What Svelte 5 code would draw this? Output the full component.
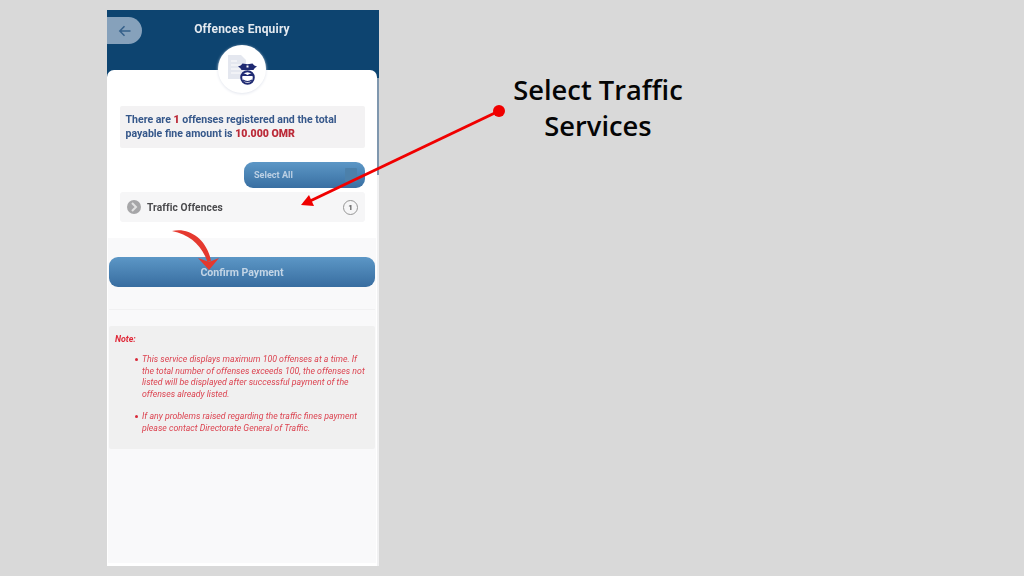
<script>
	const notes = [
		'This service displays maximum 100 offenses at a time. If the total number of offenses exceeds 100, the offenses not listed will be displayed after successful payment of the offenses already listed.',
		'If any problems raised regarding the traffic fines payment please contact Directorate General of Traffic.'
	]
</script>

<div class="slide">
	<div class="phone">
		<header class="top">
			<div class="back">
				<svg width="14" height="14" viewBox="0 0 14 14" fill="none" stroke="#35608a" stroke-width="1.5">
					<path d="M12.5 7H2M6.500 2.200 1.800 7l4.700 4.800" />
				</svg>
			</div>
			<h1>Offences Enquiry</h1>
		</header>

		<main class="card">
			<div class="badge">
				<svg width="36" height="36" viewBox="0 0 36 36">
					<path d="M4 4h13l5 5v19H4z" fill="#e4e7ef" />
					<path d="M7 10h6M7 14h12M7 18h9M7 22h9" stroke="#f5f6f9" stroke-width="1.500" />
					<path d="M14 15.500c2-.5 3.500-1.500 4.500-3l5 .8 5-.8c1 1.500 2.500 2.500 4.500 3-1.500 1-3 2-3.500 3.500h-12c-.5-1.500-2-2.500-3.500-3.500z" fill="#1f2a72" />
					<rect x="22.500" y="14.500" width="2" height="2" fill="#fff" />
					<circle cx="23.500" cy="26.500" r="6.300" fill="#fff" stroke="#1f2a72" stroke-width="2" />
					<path d="M17.500 25c1.500-3 3-2.500 6-1 3-1.500 4.500-2 6 1" fill="#1f2a72" />
					<path d="M19 29c2.500 2 6.500 2 9 0" stroke="#1f2a72" stroke-width="1.200" fill="none" />
				</svg>
			</div>

			<section class="intro">
				<p class="summary">
					There are <b>1</b> offenses registered and the total payable fine amount is <b>10.000 OMR</b>
				</p>
				<div class="actions">
					<button class="select-all"><span>Select All</span><i></i></button>
				</div>
				<div class="row">
					<span class="chevron">
						<svg width="8" height="10" viewBox="0 0 8 10" fill="none" stroke="#e2e2e2" stroke-width="2">
							<path d="M2 1l4 4-4 4" />
						</svg>
					</span>
					<span class="row-title">Traffic Offences</span>
					<span class="count">1</span>
				</div>
			</section>

			<section class="lower">
				<button class="confirm">Confirm Payment</button>
				<hr />
				<div class="note">
					<h2>Note:</h2>
					<ul>
						{#each notes as note}
							<li>{note}</li>
						{/each}
					</ul>
				</div>
			</section>
		</main>
	</div>

	<div class="callout">Select Traffic<br />Services</div>

	<svg class="overlay" width="1024" height="576" viewBox="0 0 1024 576">
		<circle cx="499" cy="111" r="6" fill="#f00000" />
		<path d="M499 111 308 202" stroke="#f00000" stroke-width="3" />
		<path d="M301 205 309 195 314 206z" fill="#f00000" />
		<path d="M172 231c17-4 35 8 39 30l-3.500 1c-6-17-17-27-35.500-31z" fill="#e5392f" />
		<path d="M198 258 209 262 219 258 209 270z" fill="#e5392f" />
	</svg>
</div>

<style>
	:global(body) {
		margin: 0;
		background: #d9d9d9;
	}

	.slide {
		position: relative;
		width: 1024px;
		height: 576px;
		overflow: hidden;
		padding: 10px 0 0 107px;
		box-sizing: border-box;
		background: #d9d9d9;
		font-family: Roboto, "Liberation Sans", sans-serif;
	}

	.phone {
		width: 272px;
		height: 556px;
		display: flex;
		flex-direction: column;
		background: linear-gradient(#0d4470 0, #0d4470 68px, #7f97ae 68px, #7f97ae 165px, #f1f1f2 165px);
		filter: blur(0.45px);
	}

	.top {
		height: 60px;
		flex: none;
		position: relative;
		box-sizing: border-box;
		padding-top: 11px;
		text-align: center;
	}

	.back {
		position: absolute;
		left: 0;
		top: 7px;
		width: 35px;
		height: 27px;
		border-radius: 0 14px 14px 0;
		background: #86a1bb;
		display: flex;
		align-items: center;
		justify-content: center;
	}

	h1 {
		margin: 0;
		padding-right: 2px;
		font-size: 12px;
		line-height: 16px;
		font-weight: 700;
		color: #e4eaf0;
		letter-spacing: 0.2px;
	}

	.card {
		flex: 1;
		width: 270px;
		position: relative;
		background: #fff;
		border-radius: 7px 7px 0 0;
		display: flex;
		flex-direction: column;
	}

	.badge {
		position: absolute;
		left: 111px;
		top: -25px;
		width: 48px;
		height: 48px;
		border-radius: 50%;
		background: #fff;
		box-shadow: 0 1px 3px #e3e6ee;
		display: flex;
		align-items: center;
		justify-content: center;
	}

	.intro {
		padding: 36px 12px 0 13px;
		height: 168px;
		flex: none;
		box-sizing: border-box;
	}

	.summary {
		margin: 0;
		height: 42px;
		box-sizing: border-box;
		padding: 7px 5.500px 0;
		background: #f3f2f3;
		border-radius: 2px;
		font-size: 10.550px;
		line-height: 13.500px;
		font-weight: 700;
		color: #35578a;
	}

	.summary b {
		color: #bb2a38;
	}

	.actions {
		margin-top: 14px;
		display: flex;
		justify-content: flex-end;
	}

	.select-all {
		width: 121px;
		height: 26px;
		padding: 0 10px;
		border: 0;
		border-radius: 9px;
		background: linear-gradient(#5c97c6, #396fa2);
		display: flex;
		align-items: center;
		justify-content: space-between;
		font: 700 9.100px Roboto, sans-serif;
		color: #bcd0e4;
	}

	.select-all i {
		width: 12px;
		height: 14px;
		background: #4c80aa;
		border-radius: 1px;
		margin-right: -2px;
	}

	.row {
		margin-top: 4px;
		height: 30px;
		padding: 0 7px;
		background: #f6f6f7;
		border-radius: 3px;
		display: flex;
		align-items: center;
		gap: 6px;
	}

	.chevron {
		width: 14px;
		height: 14px;
		border-radius: 50%;
		background: #a6a6a8;
		display: flex;
		align-items: center;
		justify-content: center;
	}

	.row-title {
		flex: 1;
		font-size: 10.200px;
		font-weight: 700;
		color: #4a4a4d;
		letter-spacing: 0.1px;
	}

	.count {
		width: 13px;
		height: 13px;
		border: 1px solid #969696;
		border-radius: 50%;
		font-size: 8px;
		font-weight: 700;
		line-height: 13px;
		text-align: center;
		color: #555;
	}

	.lower {
		flex: 1;
		margin: 0 1px 3px;
		padding: 19px 1px 0;
		background: #f9f9fa;
	}

	.confirm {
		display: block;
		width: 100%;
		height: 30px;
		border: 0;
		border-radius: 9px;
		background: linear-gradient(#5c97c6, #386da0);
		font: 700 10.600px Roboto, sans-serif;
		color: #c3d5e6;
	}

	hr {
		margin: 22px 0 16px;
		border: 0;
		border-top: 1px solid #f1f1f2;
	}

	.note {
		height: 123px;
		box-sizing: border-box;
		padding: 8px 8px 0 6px;
		background: #f0f0f0;
		border-radius: 2px;
		color: #dc4350;
		font-size: 8.760px;
		line-height: 11.600px;
		font-style: italic;
	}

	h2 {
		margin: 0;
		font-size: 8.800px;
		line-height: 11px;
		font-weight: 700;
		color: #e02a3a;
	}

	ul {
		margin: 9px 0 0;
		padding: 0 0 0 27px;
		list-style: none;
	}

	li {
		position: relative;
		margin-bottom: 11px;
	}

	li::before {
		content: "";
		position: absolute;
		left: -7px;
		top: 4px;
		width: 3px;
		height: 3px;
		border-radius: 50%;
		background: #d82a3a;
	}

	.callout {
		position: absolute;
		left: 480px;
		top: 72px;
		width: 236px;
		text-align: center;
		font: 600 27.300px/36px "Open Sans", Inter, sans-serif;
		color: #050505;
	}

	.overlay {
		position: absolute;
		left: 0;
		top: 0;
		pointer-events: none;
	}
</style>
